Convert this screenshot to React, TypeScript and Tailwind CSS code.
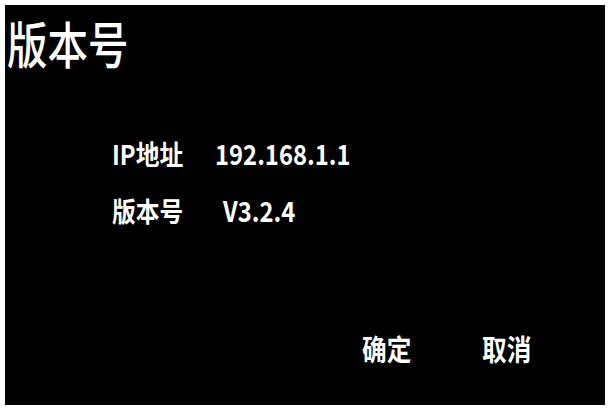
const font = "font-['Noto_Sans_CJK_SC','Noto_Sans',sans-serif]";

function Cond({ children, className = "" }: { children: React.ReactNode; className?: string }) {
  return <span className={`inline-block origin-left whitespace-nowrap ${className}`}>{children}</span>;
}

export default function App() {
  return (
    <div className={`w-[610px] h-[410px] bg-white p-[5px] ${font}`}>
      <div className="w-[600px] h-[400px] bg-black text-white flex flex-col">
        {/* 标题 */}
        <div className="pl-[2px] pt-[12px] h-[70px]">
          <Cond className="text-[50px] leading-none font-medium scale-x-[0.81]">版本号</Cond>
        </div>

        {/* 信息 */}
        <div className="mt-[62px] pl-[107px] flex flex-col gap-[27px]">
          <div className="flex items-end h-[30px]">
            <Cond className="w-[103px] text-[27px] leading-none font-bold scale-x-[0.88]">IP地址</Cond>
            <Cond className="text-[28px] leading-none font-bold scale-x-[0.85]">192.168.1.1</Cond>
          </div>
          <div className="flex items-end h-[30px]">
            <Cond className="w-[111px] text-[27px] leading-none font-bold scale-x-[0.88]">版本号</Cond>
            <Cond className="text-[28px] leading-none font-bold scale-x-[0.85]">V3.2.4</Cond>
          </div>
        </div>

        {/* 按钮 */}
        <div className="mt-auto mb-[42px] pl-[357px] flex">
          <Cond className="w-[120px] text-[29px] leading-none font-bold scale-x-[0.85]">确定</Cond>
          <Cond className="text-[29px] leading-none font-bold scale-x-[0.85]">取消</Cond>
        </div>
      </div>
    </div>
  );
}
